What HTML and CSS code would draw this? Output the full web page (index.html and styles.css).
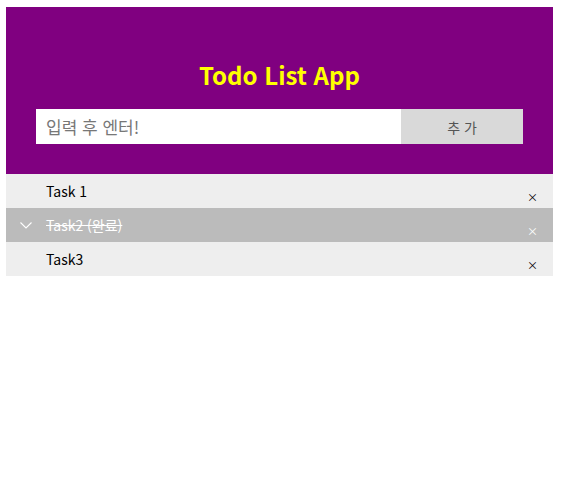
FILE: index.html
```html
<!DOCTYPE html>
<html lang="ko">
<head>
<meta charset="utf-8">
<title>Todo List App</title>
<link rel="stylesheet" href="styles.css">
</head>
<body>
<div class="header">
  <h2 class="title">Todo List App</h2>
  <div class="entry">
    <input class="entry-input" type="text" placeholder="입력 후 엔터!">
    <span class="add-btn">추 가</span>
  </div>
</div>
<ul class="todo-list">
  <li class="todo">Task 1<span class="close">×</span></li>
  <li class="todo checked">
    <svg class="check" width="12" height="7" viewBox="0 0 12 7"><polyline points="0.5,0.5 6,6 11.5,0.5" fill="none" stroke="#fff" stroke-width="1.1"/></svg>
    <span class="done-text">Task2 (완료)</span><span class="close">×</span></li>
  <li class="todo">Task3<span class="close">×</span></li>
</ul>
</body>
</html>
```
FILE: styles.css
```css
body {
  margin: 7px 8px 0 6px;
  font-family: "Noto Sans CJK KR", "Noto Sans", sans-serif;
}
.header {
  background: #800080;
  padding: 30px 30px;
  color: #ffff00;
  text-align: center;
}
.title {
  margin: 24px 0 20px;
  font-size: 24px;
  line-height: 28px;
  font-weight: bold;
}
.entry {
  display: flex;
  height: 35px;
}
.entry-input {
  flex: 1;
  min-width: 0;
  border: none;
  margin: 0;
  padding: 0 10px;
  font-family: "Noto Sans CJK KR", sans-serif;
  font-size: 17px;
  outline: none;
  background: #fff;
}
.entry-input::placeholder {
  color: #777;
}
.add-btn {
  width: 122px;
  background: #d9d9d9;
  color: #555;
  font-size: 14px;
  display: flex;
  align-items: center;
  justify-content: center;
}
.todo-list {
  list-style: none;
  margin: 0;
  padding: 0;
}
.todo {
  position: relative;
  height: 34px;
  line-height: 34px;
  padding-left: 40px;
  font-size: 14px;
  color: #000;
  background: #eeeeee;
}
.todo.checked {
  background: #bbbbbb;
  color: #fff;
}
.done-text {
  text-decoration: line-through;
}
.check {
  position: absolute;
  left: 14px;
  top: 14px;
}
.close {
  position: absolute;
  right: 15px;
  top: 6px;
  font-size: 11px;
  line-height: 34px;
}
```
